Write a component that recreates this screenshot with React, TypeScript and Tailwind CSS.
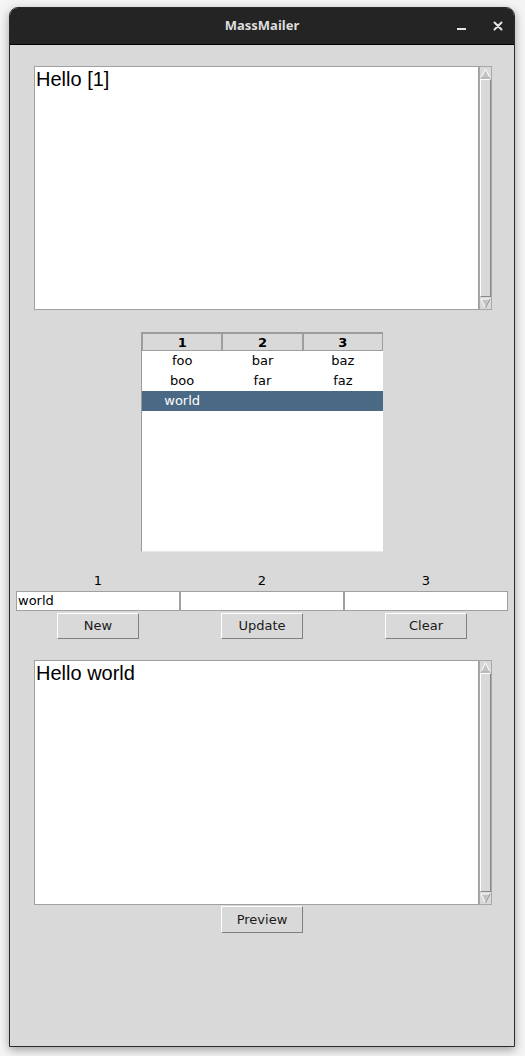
import React from 'react';

const tkFont = { fontFamily: '"DejaVu Sans", sans-serif' };

const rows = [
    ['foo', 'bar', 'baz'],
    ['boo', 'far', 'faz'],
    ['world', '', ''],
];

const ArrowUp = () => (
    <svg width="11" height="11" viewBox="0 0 11 11" className="block">
        <polygon points="5.5,1 10,10 1,10" fill="#c4c4c4" stroke="#ffffff" strokeWidth="1" />
        <line x1="1" y1="10" x2="10" y2="10" stroke="#8a8a8a" strokeWidth="1" />
    </svg>
);

const ArrowDown = () => (
    <svg width="11" height="11" viewBox="0 0 11 11" className="block">
        <polygon points="1,1 10,1 5.5,10" fill="#c4c4c4" stroke="#ffffff" strokeWidth="1" />
        <line x1="10" y1="1" x2="5.5" y2="10" stroke="#8a8a8a" strokeWidth="1" />
    </svg>
);

const Scrollbar: React.FC = () => (
    <div className="w-[13px] h-full flex flex-col bg-[#c8c8c8] border border-[#a8a8a8]">
        <div className="h-[12px] flex items-center justify-center bg-[#d9d9d9]">
            <ArrowUp />
        </div>
        <div className="flex-1 bg-[#d9d9d9] border-t border-l border-white border-r border-b border-r-[#8a8a8a] border-b-[#8a8a8a]" />
        <div className="h-[12px] flex items-center justify-center bg-[#d9d9d9]">
            <ArrowDown />
        </div>
    </div>
);

const TextBox: React.FC<{ text: string; className: string }> = ({ text, className }) => (
    <div className={'ml-[24px] w-[458px] flex ' + className}>
        <div
            className="flex-1 bg-white border border-[#a0a0a0] pl-[1px] text-[20px] leading-[24px] text-black"
            style={{ fontFamily: '"Liberation Sans", Arial, sans-serif' }}
        >
            {text}
        </div>
        <Scrollbar />
    </div>
);

const TkButton: React.FC<{ label: string; className?: string }> = ({ label, className }) => (
    <button
        className={
            'w-[82px] bg-[#d9d9d9] border border-t-white border-l-white border-r-[#7f7f7f] border-b-[#7f7f7f] text-[13px] text-[#1a1a1a] ' +
            (className || 'h-[26px]')
        }
        style={tkFont}
    >
        {label}
    </button>
);

const App: React.FC = () => {
    return (
        <div className="w-[525px] h-[1056px] bg-[#f4f4f4] pt-[7px] pl-[9px]">
            <div className="w-[506px] h-[1040px] flex flex-col rounded-t-[9px] border border-[#2b2b2b] bg-[#d9d9d9] shadow-[0_3px_10px_rgba(0,0,0,0.35)] overflow-hidden">
                {/* title bar */}
                <div className="h-[37px] shrink-0 bg-[#242424] border-b border-black relative flex items-center justify-center">
                    <span
                        className="text-[13px] font-bold text-[#dedede]"
                        style={{ fontFamily: '"Noto Sans", sans-serif' }}
                    >
                        MassMailer
                    </span>
                    <div className="absolute left-[447px] top-[20px] w-[9px] h-[2px] bg-[#e6e6e6]" />
                    <svg className="absolute left-[483px] top-[13px]" width="10" height="10" viewBox="0 0 10 10">
                        <path d="M1.5 1.5 L8.5 8.5 M8.5 1.5 L1.5 8.5" stroke="#e6e6e6" strokeWidth="2" strokeLinecap="round" />
                    </svg>
                </div>

                <div className="flex flex-col">
                    <div className="mt-[21px]">
                        <TextBox text="Hello [1]" className="h-[244px]" />
                    </div>

                    {/* tree */}
                    <div className="mt-[22px] ml-[131px] w-[242px] h-[220px] bg-white border-l border-t border-[#9a9a9a] border-b border-b-[#e8e8e8]" style={tkFont}>
                        <div className="flex h-[18px]">
                            {['1', '2', '3'].map((h) => (
                                <div
                                    key={h}
                                    className="flex-1 bg-[#d9d9d9] border border-[#9e9e9e] flex items-center justify-center text-[13px] font-bold text-black leading-none"
                                >
                                    {h}
                                </div>
                            ))}
                        </div>
                        {rows.map((r, i) => (
                            <div
                                key={i}
                                className={
                                    'flex h-[20px] text-[13px] leading-[20px] ' +
                                    (i === 2 ? 'bg-[#4a6984] text-white' : 'text-black')
                                }
                            >
                                {r.map((c, j) => (
                                    <div key={j} className="flex-1 text-center">
                                        {c}
                                    </div>
                                ))}
                            </div>
                        ))}
                    </div>

                    {/* entry fields */}
                    <div className="mt-[19px] px-[6px]" style={tkFont}>
                        <div className="flex h-[20px]">
                            {['1', '2', '3'].map((l) => (
                                <div key={l} className="flex-1 text-center text-[13px] leading-[20px] text-black">
                                    {l}
                                </div>
                            ))}
                        </div>
                        <div className="flex h-[20px]">
                            {['world', '', ''].map((v, i) => (
                                <input
                                    key={i}
                                    readOnly
                                    value={v}
                                    className="flex-1 min-w-0 bg-white border border-[#a0a0a0] px-[1px] text-[13px] text-black outline-none"
                                    style={tkFont}
                                />
                            ))}
                        </div>
                        <div className="flex mt-[2px]">
                            {['New', 'Update', 'Clear'].map((b) => (
                                <div key={b} className="flex-1 flex justify-center">
                                    <TkButton label={b} />
                                </div>
                            ))}
                        </div>
                    </div>

                    <div className="mt-[21px]">
                        <TextBox text="Hello world" className="h-[245px]" />
                    </div>

                    <div className="mt-[1px] flex justify-center">
                        <TkButton label="Preview" className="h-[27px]" />
                    </div>
                </div>
            </div>
        </div>
    );
};

export default App;
